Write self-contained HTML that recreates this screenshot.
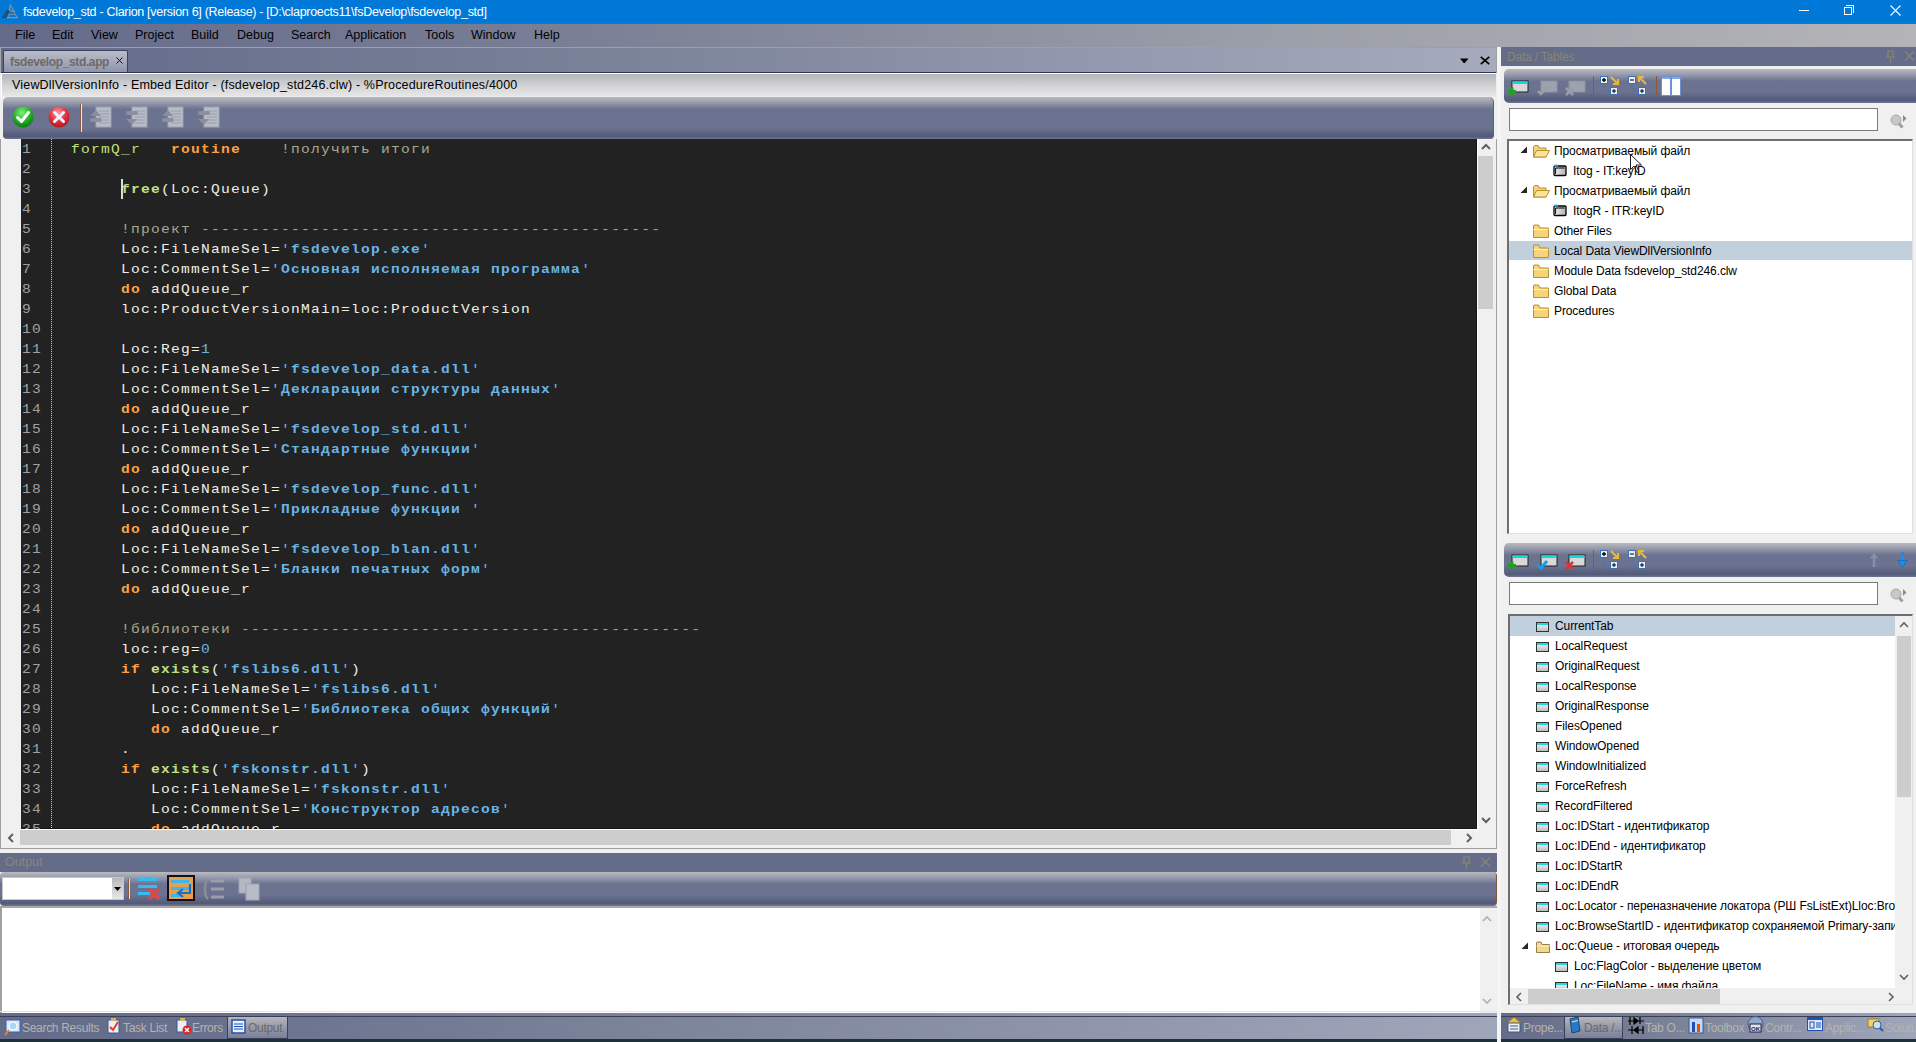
<!DOCTYPE html>
<html><head><meta charset="utf-8">
<style>
*{margin:0;padding:0;box-sizing:border-box}
html,body{width:1916px;height:1042px;overflow:hidden;background:#f0f0f0;font-family:"Liberation Sans",sans-serif;font-size:12px;color:#000}
.a{position:absolute}
svg{position:absolute;overflow:visible}
#title{left:0;top:0;width:1916px;height:23px;background:#0078d7;color:#fff}
#title .t{left:23px;top:5px;font-size:12.5px;white-space:pre;letter-spacing:-0.3px}
#menu{left:0;top:23px;width:1916px;height:24px;background:linear-gradient(90deg,#646b8a 0%,#7a7f96 30%,#9a9ea8 65%,#b4b4b8 100%);border-top:1px solid #5a6282}
#menu span{position:absolute;top:4px;font-size:12.5px}
#tabstrip{left:0;top:47px;width:1497px;height:26px;background:linear-gradient(90deg,#626a8a 0%,#7a8298 40%,#9096ac 70%,#a6aabd 100%);border-top:1px solid #a0a0a0;border-left:1px solid #a8a8a8;border-right:1px solid #a0a0a0}
#doctab{left:3px;top:50px;width:125px;height:23px;border:1px solid #3a4260;border-bottom:none;border-radius:2px 2px 0 0;background:linear-gradient(180deg,#babcc6 0%,#a6aabb 45%,#8c92aa 100%)}
#doctab .t{left:6px;top:4px;font-size:12px;font-weight:bold;color:#6b6a66;letter-spacing:-0.37px}
#tabline{left:1px;top:72px;width:1495px;height:1px;background:#2e3450}
#embtitle{left:1px;top:73px;width:1495px;height:24px;background:linear-gradient(180deg,#b6b8bc 1px,#c8c9cc 8px,#dcdcdc 16px,#e6e6e6 22px,#f2f2f2 23px);border-top:1px solid #ffffff;border-left:1px solid #fff}
#embtitle .t{left:10px;top:4px;font-size:12.5px;white-space:pre;color:#000;letter-spacing:0.18px}
#tb{left:3px;top:97px;width:1491px;height:42px;border-radius:5px 5px 4px 4px;background:linear-gradient(180deg,#b8babe 0px,#9a9eae 5px,#6b7390 12px,#6b7390 31px,#5a6180 37px,#535a77 40px,#6a7090 41px);border-right:1px solid #7a5a40}
#editor{left:0;top:139px;width:1497px;height:710px;background:#f0f0f0;border-left:1px solid #a0a0a0;border-right:1px solid #a0a0a0;border-bottom:1px solid #a0a0a0}
#code{left:21px;top:139px;width:1457px;height:690px;background:#222;overflow:hidden;border-right:1px solid #fff;box-shadow:inset -1px -1px 0 #151515}
.ln{position:absolute;left:1px;line-height:20px;width:40px;font-family:"Liberation Mono",monospace;font-size:13.5px;color:#a0a0a0;white-space:pre;letter-spacing:1.16px;transform:scaleX(1.08);transform-origin:0 0}
.cl{position:absolute;left:50px;line-height:20px;font-family:"Liberation Mono",monospace;font-size:13.5px;color:#eeeee6;white-space:pre;letter-spacing:1.16px;transform:scaleX(1.08);transform-origin:0 0}
.k{color:#ffa040;font-weight:bold}
.g{color:#c0e080}
.gb{color:#c0e080;font-weight:bold}
.s{color:#6ab4e4;font-weight:bold}
.q{color:#6ab4e4}
.n{color:#6ab4e4}
.c{color:#a8a890}
.chev{position:absolute;width:6px;height:6px;border-left:2px solid #606060;border-top:2px solid #606060}
#outhdr{left:0;top:853px;width:1497px;height:19px;background:#646c8a}
#outhdr .t{left:5px;top:2px;font-size:12.5px;color:#8a8672}
#outtb{left:0;top:872px;width:1497px;height:34px;border-radius:4px;border-right:1px solid #7a5a40;background:linear-gradient(180deg,#b8babe 0px,#9a9eae 5px,#6b7390 12px,#6b7390 23px,#5a6180 29px,#535a77 32px,#6a7090 33px)}
#outbody{left:0;top:906px;width:1497px;height:107px;background:#fff;border-left:2px solid #a0a0a0;border-top:2px solid #a8a8a8;border-right:1px solid #a0a0a0}
#bottabs{left:0;top:1013px;width:1497px;height:29px;background:linear-gradient(90deg,#646c8a 0%,#68708e 13%,#7a8298 40%,#a0a6ba 100%);border-bottom:3px solid #1e3038}
.well{position:absolute;left:0;top:3px;width:100%;height:1px;background:#3a4058}
.seltab{position:absolute;top:3px;height:23px;background:linear-gradient(180deg,#b8b8bc 0%,#9a9eae 40%,#7a8098 100%);border:1px solid #3a4058}
.bt{position:absolute;top:8px;font-size:12px;letter-spacing:-0.3px;color:#b4b4ae;white-space:nowrap}
#right{left:1501px;top:47px;width:415px;height:995px;background:#f0f0f0}
.tbr{border-radius:5px 0 0 5px;background:linear-gradient(180deg,#b8babe 0px,#9a9eae 5px,#6b7390 12px,#6b7390 23px,#5a6180 29px,#535a77 32px,#6a7090 33px)}
</style></head><body>
<div id="title" class="a">
<svg style="left:0px;top:0px" width="20" height="20" viewBox="0 0 20 20"><path d="M10.3 5 L14.5 12 L9.2 9.8 Z" fill="none" stroke="#909090" stroke-width="1.1"/><path d="M3 17.5 L7.2 10.5 L8.6 11.5 L5.6 17.5 Z" fill="none" stroke="#3a3a3a" stroke-width="1.2"/><path d="M9.5 14.2 L15.2 14.2 L17.5 17.6 L7.6 17.6 Z" fill="none" stroke="#909090" stroke-width="1.1"/></svg>
<div class="t a">fsdevelop_std - Clarion [version 6] (Release) - [D:\claproects11\fsDevelop\fsdevelop_std]</div>
<div class="a" style="left:1799px;top:10px;width:10px;height:1px;background:#fff"></div>
<div class="a" style="left:1844px;top:7px;width:8px;height:8px;border:1px solid #fff"></div>
<div class="a" style="left:1846px;top:5px;width:8px;height:8px;border-top:1px solid #fff;border-right:1px solid #fff"></div>
<svg style="left:1890px;top:5px" width="11" height="11" viewBox="0 0 11 11"><path d="M0.5 0.5 L10.5 10.5 M10.5 0.5 L0.5 10.5" stroke="#fff" stroke-width="1.1"/></svg>
</div>
<div id="menu" class="a">
<span style="left:15px">File</span><span style="left:52px">Edit</span><span style="left:91px">View</span><span style="left:135px">Project</span><span style="left:191px">Build</span><span style="left:237px">Debug</span><span style="left:291px">Search</span><span style="left:345px">Application</span><span style="left:425px">Tools</span><span style="left:471px">Window</span><span style="left:534px">Help</span>
</div>
<div id="tabstrip" class="a">
<svg style="left:1459px;top:10px" width="9" height="6" viewBox="0 0 9 6"><path d="M0 0.5 L8.5 0.5 L4.8 5 L3.7 5 Z" fill="#000"/></svg>
<svg style="left:1479px;top:8px" width="10" height="9" viewBox="0 0 10 9"><path d="M0.8 0.8 L9.2 8.2 M9.2 0.8 L0.8 8.2" stroke="#000" stroke-width="1.7"/></svg>
</div>
<div id="doctab" class="a"><div class="t a">fsdevelop_std.app</div>
<svg style="left:112px;top:6px" width="7" height="7" viewBox="0 0 7 7"><path d="M0.5 0.5 L6.5 6.5 M6.5 0.5 L0.5 6.5" stroke="#111" stroke-width="1"/></svg>
</div>
<div id="tabline" class="a"></div>
<div id="embtitle" class="a"><div class="t a">ViewDllVersionInfo - Embed Editor - (fsdevelop_std246.clw) - %ProcedureRoutines/4000</div></div>
<div id="tb" class="a">
<svg style="left:9px;top:9px" width="22" height="22" viewBox="0 0 22 22"><defs><radialGradient id="gg" cx="0.45" cy="0.3" r="0.7"><stop offset="0" stop-color="#7ef07a"/><stop offset="0.6" stop-color="#22b022"/><stop offset="1" stop-color="#0a7a10"/></radialGradient></defs><circle cx="11" cy="11" r="10.5" fill="url(#gg)"/><path d="M5.5 11.5 L9.5 15.5 L16.5 6.5" fill="none" stroke="#fff" stroke-width="3" stroke-linecap="round" stroke-linejoin="round"/></svg>
<svg style="left:45px;top:9px" width="22" height="22" viewBox="0 0 22 22"><defs><radialGradient id="rg" cx="0.45" cy="0.3" r="0.7"><stop offset="0" stop-color="#f89aa0"/><stop offset="0.6" stop-color="#e0303a"/><stop offset="1" stop-color="#b01820"/></radialGradient></defs><circle cx="11" cy="11" r="10.5" fill="url(#rg)"/><path d="M6.5 6.5 L15.5 15.5 M15.5 6.5 L6.5 15.5" fill="none" stroke="#eef4ff" stroke-width="3" stroke-linecap="round"/></svg>
<div class="a" style="left:77px;top:7px;width:1px;height:28px;background:#8a5a3a"></div>
<div class="a" style="left:78px;top:7px;width:1px;height:28px;background:#e8e8ee"></div>
<svg style="left:87px;top:10px" width="22" height="21" viewBox="0 0 22 21"><rect x="6" y="0" width="15" height="20" fill="#b8bcc8" stroke="#a0a4b0"/><path d="M9 4h10M9 7h10M9 10h10M9 13h10M9 16h10" stroke="#9ca0ac"/><path d="M0 9 L6 3 L11 9 Z" fill="#8c909c"/><rect x="0" y="11" width="12" height="4" rx="2" fill="#8c909c"/></svg>
<svg style="left:123px;top:10px" width="22" height="21" viewBox="0 0 22 21"><rect x="6" y="0" width="15" height="20" fill="#b8bcc8" stroke="#a0a4b0"/><path d="M9 4h10M9 7h10M9 10h10M9 13h10M9 16h10" stroke="#9ca0ac"/><rect x="0" y="4" width="12" height="4" rx="2" fill="#8c909c"/><path d="M0 12 L11 12 L6 18 Z" fill="#8c909c"/></svg>
<svg style="left:159px;top:10px" width="22" height="21" viewBox="0 0 22 21"><rect x="6" y="0" width="15" height="20" fill="#b8bcc8" stroke="#a0a4b0"/><path d="M9 4h10M9 7h10M9 10h10M9 13h10M9 16h10" stroke="#9ca0ac"/><path d="M0 9 L6 3 L11 9 Z" fill="#8c909c"/><rect x="0" y="11" width="12" height="4" rx="2" fill="#8c909c"/></svg>
<svg style="left:195px;top:10px" width="22" height="21" viewBox="0 0 22 21"><rect x="6" y="0" width="15" height="20" fill="#b8bcc8" stroke="#a0a4b0"/><path d="M9 4h10M9 7h10M9 10h10M9 13h10M9 16h10" stroke="#9ca0ac"/><rect x="0" y="4" width="12" height="4" rx="2" fill="#8c909c"/><path d="M0 12 L11 12 L6 18 Z" fill="#8c909c"/></svg>
</div>
<div id="editor" class="a">
<!-- vertical scrollbar -->
<div class="a" style="left:1477px;top:17px;width:15px;height:153px;background:#cdcdcd"></div>
<svg style="left:1480px;top:5px" width="10" height="6" viewBox="0 0 10 6"><path d="M1 5 L5 1 L9 5" fill="none" stroke="#606060" stroke-width="2"/></svg>
<svg style="left:1480px;top:678px" width="10" height="6" viewBox="0 0 10 6"><path d="M1 1 L5 5 L9 1" fill="none" stroke="#606060" stroke-width="2"/></svg>
<!-- horizontal scrollbar -->
<div class="a" style="left:19px;top:691px;width:1431px;height:15px;background:#cdcdcd"></div>
<svg style="left:7px;top:694px" width="6" height="10" viewBox="0 0 6 10"><path d="M5 1 L1 5 L5 9" fill="none" stroke="#606060" stroke-width="2"/></svg>
<svg style="left:1465px;top:694px" width="6" height="10" viewBox="0 0 6 10"><path d="M1 1 L5 5 L1 9" fill="none" stroke="#606060" stroke-width="2"/></svg>
</div>
<div id="code" class="a">
<div class="a" style="left:30px;top:0;width:1px;height:690px;background:repeating-linear-gradient(180deg,#c8c8c8 0 1px,transparent 1px 2px)"></div>
<div class="ln" style="top:1px">1</div>
<div class="cl" style="top:1px"><span class="g">formQ_r</span>   <span class="k">routine</span>    <span class="c">!получить итоги</span></div>
<div class="ln" style="top:21px">2</div>
<div class="ln" style="top:41px">3</div>
<div class="cl" style="top:41px">     <span class="gb">free</span>(Loc:Queue)</div>
<div class="ln" style="top:61px">4</div>
<div class="ln" style="top:81px">5</div>
<div class="cl" style="top:81px">     <span class="c">!проект ----------------------------------------------</span></div>
<div class="ln" style="top:101px">6</div>
<div class="cl" style="top:101px">     Loc:FileNameSel=<span class="q">&#x27;</span><span class="s">fsdevelop.exe</span><span class="q">&#x27;</span></div>
<div class="ln" style="top:121px">7</div>
<div class="cl" style="top:121px">     Loc:CommentSel=<span class="q">&#x27;</span><span class="s">Основная исполняемая программа</span><span class="q">&#x27;</span></div>
<div class="ln" style="top:141px">8</div>
<div class="cl" style="top:141px">     <span class="k">do</span> addQueue_r</div>
<div class="ln" style="top:161px">9</div>
<div class="cl" style="top:161px">     loc:ProductVersionMain=loc:ProductVersion</div>
<div class="ln" style="top:181px">10</div>
<div class="ln" style="top:201px">11</div>
<div class="cl" style="top:201px">     Loc:Reg=<span class="n">1</span></div>
<div class="ln" style="top:221px">12</div>
<div class="cl" style="top:221px">     Loc:FileNameSel=<span class="q">&#x27;</span><span class="s">fsdevelop_data.dll</span><span class="q">&#x27;</span></div>
<div class="ln" style="top:241px">13</div>
<div class="cl" style="top:241px">     Loc:CommentSel=<span class="q">&#x27;</span><span class="s">Декларации структуры данных</span><span class="q">&#x27;</span></div>
<div class="ln" style="top:261px">14</div>
<div class="cl" style="top:261px">     <span class="k">do</span> addQueue_r</div>
<div class="ln" style="top:281px">15</div>
<div class="cl" style="top:281px">     Loc:FileNameSel=<span class="q">&#x27;</span><span class="s">fsdevelop_std.dll</span><span class="q">&#x27;</span></div>
<div class="ln" style="top:301px">16</div>
<div class="cl" style="top:301px">     Loc:CommentSel=<span class="q">&#x27;</span><span class="s">Стандартные функции</span><span class="q">&#x27;</span></div>
<div class="ln" style="top:321px">17</div>
<div class="cl" style="top:321px">     <span class="k">do</span> addQueue_r</div>
<div class="ln" style="top:341px">18</div>
<div class="cl" style="top:341px">     Loc:FileNameSel=<span class="q">&#x27;</span><span class="s">fsdevelop_func.dll</span><span class="q">&#x27;</span></div>
<div class="ln" style="top:361px">19</div>
<div class="cl" style="top:361px">     Loc:CommentSel=<span class="q">&#x27;</span><span class="s">Прикладные функции </span><span class="q">&#x27;</span></div>
<div class="ln" style="top:381px">20</div>
<div class="cl" style="top:381px">     <span class="k">do</span> addQueue_r</div>
<div class="ln" style="top:401px">21</div>
<div class="cl" style="top:401px">     Loc:FileNameSel=<span class="q">&#x27;</span><span class="s">fsdevelop_blan.dll</span><span class="q">&#x27;</span></div>
<div class="ln" style="top:421px">22</div>
<div class="cl" style="top:421px">     Loc:CommentSel=<span class="q">&#x27;</span><span class="s">Бланки печатных форм</span><span class="q">&#x27;</span></div>
<div class="ln" style="top:441px">23</div>
<div class="cl" style="top:441px">     <span class="k">do</span> addQueue_r</div>
<div class="ln" style="top:461px">24</div>
<div class="ln" style="top:481px">25</div>
<div class="cl" style="top:481px">     <span class="c">!библиотеки ----------------------------------------------</span></div>
<div class="ln" style="top:501px">26</div>
<div class="cl" style="top:501px">     loc:reg=<span class="n">0</span></div>
<div class="ln" style="top:521px">27</div>
<div class="cl" style="top:521px">     <span class="k">if</span> <span class="gb">exists</span>(<span class="q">&#x27;</span><span class="s">fslibs6.dll</span><span class="q">&#x27;</span>)</div>
<div class="ln" style="top:541px">28</div>
<div class="cl" style="top:541px">        Loc:FileNameSel=<span class="q">&#x27;</span><span class="s">fslibs6.dll</span><span class="q">&#x27;</span></div>
<div class="ln" style="top:561px">29</div>
<div class="cl" style="top:561px">        Loc:CommentSel=<span class="q">&#x27;</span><span class="s">Библиотека общих функций</span><span class="q">&#x27;</span></div>
<div class="ln" style="top:581px">30</div>
<div class="cl" style="top:581px">        <span class="k">do</span> addQueue_r</div>
<div class="ln" style="top:601px">31</div>
<div class="cl" style="top:601px">     .</div>
<div class="ln" style="top:621px">32</div>
<div class="cl" style="top:621px">     <span class="k">if</span> <span class="gb">exists</span>(<span class="q">&#x27;</span><span class="s">fskonstr.dll</span><span class="q">&#x27;</span>)</div>
<div class="ln" style="top:641px">33</div>
<div class="cl" style="top:641px">        Loc:FileNameSel=<span class="q">&#x27;</span><span class="s">fskonstr.dll</span><span class="q">&#x27;</span></div>
<div class="ln" style="top:661px">34</div>
<div class="cl" style="top:661px">        Loc:CommentSel=<span class="q">&#x27;</span><span class="s">Конструктор адресов</span><span class="q">&#x27;</span></div>
<div class="ln" style="top:681px">35</div>
<div class="cl" style="top:681px">        <span class="k">do</span> addQueue_r</div>

<div class="a" style="left:100px;top:40px;width:2px;height:20px;background:#dcdcdc"></div>
</div>
<div class="a" style="left:21px;top:829px;width:1457px;height:1px;background:#fff"></div>
<div id="outhdr" class="a"><div class="t a">Output</div>
<svg style="left:1462px;top:3px" width="9" height="13" viewBox="0 0 9 13"><path d="M2 1h5v6h-5z M0 7h9 M4.5 7v6" fill="none" stroke="#8a8672" stroke-width="1.2"/></svg>
<svg style="left:1480px;top:4px" width="11" height="10" viewBox="0 0 11 10"><path d="M1 0.5 L10 9.5 M10 0.5 L1 9.5" stroke="#8a8672" stroke-width="1.2"/></svg>
</div>
<div id="outtb" class="a">
<div class="a" style="left:2px;top:5px;width:122px;height:23px;background:#fff;border:1px solid #c8c8c8"></div>
<div class="a" style="left:112px;top:6px;width:11px;height:21px;background:linear-gradient(180deg,#b8b8b8,#e8e8e8)"></div>
<svg style="left:114px;top:15px" width="7" height="4" viewBox="0 0 7 4"><path d="M0 0 L7 0 L3.5 4 Z" fill="#000"/></svg>
<div class="a" style="left:128px;top:7px;width:1px;height:20px;background:#8a5a3a"></div>
<div class="a" style="left:129px;top:7px;width:1px;height:20px;background:#e0e0e8"></div>
<svg style="left:138px;top:5px" width="24" height="24" viewBox="0 0 24 24"><path d="M0 2.5h19M0 9.5h19M0 16.5h12" stroke="#3ab8f0" stroke-width="3"/><path d="M11 12 L21 22 M21 12 L11 22" stroke="#e04848" stroke-width="3.5"/></svg>
<div class="a" style="left:167px;top:3px;width:28px;height:26px;background:#e8a050;border:2px solid #111"></div>
<svg style="left:170px;top:7px" width="22" height="20" viewBox="0 0 22 20"><path d="M1 2.5h18M1 9.5h18M1 16.5h10" stroke="#3ab8f0" stroke-width="3"/><path d="M20 5 V14 H10 M13 10 L8 14 L13 18" fill="none" stroke="#1a70c8" stroke-width="2.2"/></svg>
<svg style="left:203px;top:6px" width="22" height="22" viewBox="0 0 22 22"><path d="M8 3h13M8 11h13M8 19h13" stroke="#9a9eaa" stroke-width="3"/><path d="M5 1 C1 4 1 18 5 21" fill="none" stroke="#8a8e9a" stroke-width="2.5"/></svg>
<svg style="left:238px;top:5px" width="22" height="24" viewBox="0 0 22 24"><rect x="1" y="1" width="12" height="15" fill="#b4b8c4" stroke="#a0a4b0"/><rect x="8" y="7" width="13" height="16" fill="#b8bcc8" stroke="#a0a4b0"/></svg>
</div>
<div id="outbody" class="a">
<div class="a" style="left:1478px;top:0;width:17px;height:105px;background:#f0f0f0"></div>
<svg style="left:1480px;top:8px" width="10" height="6" viewBox="0 0 10 6"><path d="M1 5 L5 1 L9 5" fill="none" stroke="#b0b0b0" stroke-width="1.6"/></svg>
<svg style="left:1480px;top:90px" width="10" height="6" viewBox="0 0 10 6"><path d="M1 1 L5 5 L9 1" fill="none" stroke="#b0b0b0" stroke-width="1.6"/></svg>
</div>
<div class="a" style="left:0;top:1011px;width:1497px;height:1px;background:#e4e4e4"></div>
<div id="bottabs" class="a">
<div class="well"></div><div class="seltab" style="left:227px;width:61px"></div>
<svg style="left:4px;top:6px" width="17" height="17" viewBox="0 0 17 17"><rect x="2" y="1" width="14" height="12" fill="#dfe8f8" stroke="#3060c0"/><circle cx="9" cy="7" r="4" fill="#a8d8f8" stroke="#fff"/><path d="M5 11 L1 16" stroke="#e08a30" stroke-width="2"/></svg>
<div class="bt" style="left:22px">Search Results</div>
<svg style="left:107px;top:4px" width="13" height="17" viewBox="0 0 13 17"><rect x="1" y="3" width="11" height="13" fill="#e8eef8" stroke="#3a5a90"/><rect x="4" y="1" width="5" height="3" fill="#d0b070"/><path d="M3 10 L6 13 L11 5" fill="none" stroke="#e04020" stroke-width="2"/></svg>
<div class="bt" style="left:123px">Task List</div>
<svg style="left:176px;top:4px" width="16" height="18" viewBox="0 0 16 18"><rect x="1" y="3" width="10" height="12" fill="#e8eef8" stroke="#3a5a90"/><rect x="4" y="1" width="5" height="3" fill="#d0b070"/><circle cx="11" cy="13" r="4.5" fill="#e02020"/><path d="M9 11 L13 15 M13 11 L9 15" stroke="#fff" stroke-width="1.4"/></svg>
<div class="bt" style="left:192px">Errors</div>
<svg style="left:231px;top:6px" width="15" height="15" viewBox="0 0 15 15"><rect x="1" y="1" width="13" height="13" fill="#e8f0fc" stroke="#2050b0" stroke-width="1.5"/><path d="M3 5h9M3 7.5h9M3 10h9" stroke="#2050b0"/></svg>
<div class="bt" style="left:248px;color:#6a6a64">Output</div>
</div>
<div id="right" class="a">
<div class="a" style="left:-4px;top:0;width:4px;height:995px;background:#f4f4f4"></div>
<!-- header -->
<div class="a" style="left:0;top:0;width:415px;height:19px;background:#646c8a">
<div class="a" style="left:6px;top:3px;font-size:12px;letter-spacing:-0.2px;color:#8a8672">Data / Tables</div>
<svg style="left:385px;top:3px" width="9" height="13" viewBox="0 0 9 13"><path d="M2 1h5v6h-5z M0 7h9 M4.5 7v6" fill="none" stroke="#8a8672" stroke-width="1.2"/></svg>
<svg style="left:403px;top:4px" width="11" height="10" viewBox="0 0 11 10"><path d="M1 0.5 L10 9.5 M10 0.5 L1 9.5" stroke="#8a8672" stroke-width="1.2"/></svg>
</div>
<!-- toolbar 1 -->
<div class="a tbr" style="left:3px;top:22px;width:412px;height:34px"></div>
<svg style="left:7px;top:33px" width="22" height="17" viewBox="0 0 22 17"><rect x="4" y="1" width="16" height="11" fill="#d8d8d8" stroke="#202020"/><rect x="4.5" y="1.5" width="15" height="2.5" fill="#10d8e0"/><path d="M0 11.5h8M4 7.5v8" stroke="#20a020" stroke-width="3"/></svg>
<svg style="left:36px;top:33px" width="22" height="17" viewBox="0 0 22 17"><rect x="4" y="1" width="16" height="11" fill="#9ea2ae" stroke="#8e929e"/><path d="M1 11 L4 14 L10 7" fill="none" stroke="#9a9eaa" stroke-width="2.5"/></svg>
<svg style="left:64px;top:33px" width="22" height="17" viewBox="0 0 22 17"><rect x="4" y="1" width="16" height="11" fill="#9ea2ae" stroke="#8e929e"/><path d="M1 8 L8 15 M8 8 L1 15" stroke="#9a9eaa" stroke-width="2.5"/></svg>
<div class="a" style="left:92px;top:29px;width:1px;height:19px;background:#8a5a3a"></div>
<svg style="left:99px;top:29px" width="21" height="19" viewBox="0 0 21 19"><rect x="0.5" y="0.5" width="7" height="7" fill="#e8ecf4" stroke="#4070b0"/><path d="M2 4h4M4 2v4" stroke="#000" stroke-width="1.3"/><rect x="10.5" y="11.5" width="7" height="7" fill="#e8ecf4" stroke="#4070b0"/><path d="M12 15h4M14 13v4" stroke="#000"/><path d="M4 8v7h6" fill="none" stroke="#4070b0" stroke-dasharray="1 1"/><path d="M11 1 L18 8 M18 3v5h-5" fill="none" stroke="#e8b830" stroke-width="2.2"/></svg>
<svg style="left:127px;top:29px" width="21" height="19" viewBox="0 0 21 19"><rect x="0.5" y="0.5" width="7" height="7" fill="#e8ecf4" stroke="#4070b0"/><path d="M2 4h4" stroke="#000"/><rect x="10.5" y="11.5" width="7" height="7" fill="#e8ecf4" stroke="#4070b0"/><path d="M12 15h4M14 13v4" stroke="#000"/><path d="M4 8v7h6" fill="none" stroke="#4070b0" stroke-dasharray="1 1"/><path d="M18 8 L11 1 M11 6v-5h5" fill="none" stroke="#e8b830" stroke-width="2.2"/></svg>
<div class="a" style="left:155px;top:29px;width:1px;height:19px;background:#8a5a3a"></div>
<svg style="left:160px;top:29px" width="20" height="20" viewBox="0 0 20 20"><rect x="0.5" y="0.5" width="9" height="19" fill="#fff" stroke="#7090d0"/><rect x="10.5" y="0.5" width="9" height="19" fill="#fff" stroke="#7090d0"/><rect x="1" y="1" width="8" height="2" fill="#80a8e8"/><rect x="11" y="1" width="8" height="2" fill="#80a8e8"/></svg>
<!-- search 1 -->
<div class="a" style="left:8px;top:61px;width:369px;height:23px;background:#fff;border:1px solid #7a7a7a"></div>
<svg style="left:389px;top:67px" width="17" height="15" viewBox="0 0 17 15"><circle cx="6" cy="6" r="5" fill="#c8c8c8" stroke="#a8a8a8"/><path d="M9 9.5 L12.5 13.5" stroke="#a0a0a0" stroke-width="3"/><path d="M13 1 L16.5 4.5 L13 8 Z" fill="#8a8a8a"/></svg>
<!-- tree 1 -->
<div class="a" style="left:6px;top:92px;width:406px;height:395px;background:#fff;border-top:2px solid #6e6e6e;border-left:2px solid #6e6e6e;border-right:1px solid #e0e0e0;border-bottom:1px solid #e0e0e0"></div>
<div class="a" style="left:8px;top:194px;width:403px;height:19px;background:#c2cfdc"></div>
<svg style="left:19px;top:99px" width="8" height="8" viewBox="0 0 8 8"><path d="M7 0.5 L7 7 L0.5 7 Z" fill="#262626"/></svg>
<svg style="left:32px;top:97px" width="17" height="14" viewBox="0 0 17 14"><path d="M0.5 2.5 L0.5 13 L13 13 L13 4 L6 4 L5 1.5 L1.5 1.5 Z" fill="#f6d47a" stroke="#b8902a"/><path d="M0.5 13 L3.5 6.5 L16.5 6.5 L13 13 Z" fill="#fbe49a" stroke="#b8902a"/></svg>
<div class="a" style="left:53px;top:97px;font-size:12px;letter-spacing:-0.1px;white-space:nowrap;">Просматриваемый файл</div>
<svg style="left:52px;top:117px" width="15" height="13" viewBox="0 0 15 13"><defs><linearGradient id="tg" x1="0" y1="0" x2="1" y2="0"><stop offset="0" stop-color="#f4f4f4"/><stop offset="1" stop-color="#b0b0b0"/></linearGradient></defs><rect x="1" y="2" width="12" height="9.5" rx="1" fill="url(#tg)" stroke="#000" stroke-width="1.3"/><path d="M2.6 4 H11.5 M2.6 4 V10" fill="none" stroke="#000" stroke-width="1"/><rect x="1.5" y="0.6" width="3.5" height="2" fill="#20a8f0"/></svg>
<div class="a" style="left:72px;top:117px;font-size:12px;letter-spacing:-0.1px;white-space:nowrap;">Itog - IT:keyID</div>
<svg style="left:19px;top:139px" width="8" height="8" viewBox="0 0 8 8"><path d="M7 0.5 L7 7 L0.5 7 Z" fill="#262626"/></svg>
<svg style="left:32px;top:137px" width="17" height="14" viewBox="0 0 17 14"><path d="M0.5 2.5 L0.5 13 L13 13 L13 4 L6 4 L5 1.5 L1.5 1.5 Z" fill="#f6d47a" stroke="#b8902a"/><path d="M0.5 13 L3.5 6.5 L16.5 6.5 L13 13 Z" fill="#fbe49a" stroke="#b8902a"/></svg>
<div class="a" style="left:53px;top:137px;font-size:12px;letter-spacing:-0.1px;white-space:nowrap;">Просматриваемый файл</div>
<svg style="left:52px;top:157px" width="15" height="13" viewBox="0 0 15 13"><defs><linearGradient id="tg" x1="0" y1="0" x2="1" y2="0"><stop offset="0" stop-color="#f4f4f4"/><stop offset="1" stop-color="#b0b0b0"/></linearGradient></defs><rect x="1" y="2" width="12" height="9.5" rx="1" fill="url(#tg)" stroke="#000" stroke-width="1.3"/><path d="M2.6 4 H11.5 M2.6 4 V10" fill="none" stroke="#000" stroke-width="1"/><rect x="1.5" y="0.6" width="3.5" height="2" fill="#20a8f0"/></svg>
<div class="a" style="left:72px;top:157px;font-size:12px;letter-spacing:-0.1px;white-space:nowrap;">ItogR - ITR:keyID</div>
<svg style="left:32px;top:177px" width="16" height="14" viewBox="0 0 16 14"><path d="M0.5 2 L0.5 13.5 L15.5 13.5 L15.5 4 L7 4 L5.5 1 L1 1 Z" fill="#f6d47a" stroke="#b8902a"/><path d="M0.5 5.5 H15.5" stroke="#fff2c0"/></svg>
<div class="a" style="left:53px;top:177px;font-size:12px;letter-spacing:-0.1px;white-space:nowrap;">Other Files</div>
<svg style="left:32px;top:197px" width="16" height="14" viewBox="0 0 16 14"><path d="M0.5 2 L0.5 13.5 L15.5 13.5 L15.5 4 L7 4 L5.5 1 L1 1 Z" fill="#f6d47a" stroke="#b8902a"/><path d="M0.5 5.5 H15.5" stroke="#fff2c0"/></svg>
<div class="a" style="left:53px;top:197px;font-size:12px;letter-spacing:-0.1px;white-space:nowrap;">Local Data ViewDllVersionInfo</div>
<svg style="left:32px;top:217px" width="16" height="14" viewBox="0 0 16 14"><path d="M0.5 2 L0.5 13.5 L15.5 13.5 L15.5 4 L7 4 L5.5 1 L1 1 Z" fill="#f6d47a" stroke="#b8902a"/><path d="M0.5 5.5 H15.5" stroke="#fff2c0"/></svg>
<div class="a" style="left:53px;top:217px;font-size:12px;letter-spacing:-0.1px;white-space:nowrap;">Module Data fsdevelop_std246.clw</div>
<svg style="left:32px;top:237px" width="16" height="14" viewBox="0 0 16 14"><path d="M0.5 2 L0.5 13.5 L15.5 13.5 L15.5 4 L7 4 L5.5 1 L1 1 Z" fill="#f6d47a" stroke="#b8902a"/><path d="M0.5 5.5 H15.5" stroke="#fff2c0"/></svg>
<div class="a" style="left:53px;top:237px;font-size:12px;letter-spacing:-0.1px;white-space:nowrap;">Global Data</div>
<svg style="left:32px;top:257px" width="16" height="14" viewBox="0 0 16 14"><path d="M0.5 2 L0.5 13.5 L15.5 13.5 L15.5 4 L7 4 L5.5 1 L1 1 Z" fill="#f6d47a" stroke="#b8902a"/><path d="M0.5 5.5 H15.5" stroke="#fff2c0"/></svg>
<div class="a" style="left:53px;top:257px;font-size:12px;letter-spacing:-0.1px;white-space:nowrap;">Procedures</div>
<svg style="left:129px;top:107px" width="14" height="20" viewBox="0 0 14 20"><path d="M0.5 0.5 V15.5 L4 12 L7 18.5 L9 17.5 L6 11 L11.5 11 Z" fill="none" stroke="#1a1a2a" stroke-width="1"/></svg>
<!-- toolbar 2 -->
<div class="a tbr" style="left:3px;top:496px;width:412px;height:34px"></div>
<svg style="left:7px;top:507px" width="22" height="17" viewBox="0 0 22 17"><rect x="4" y="1" width="16" height="11" fill="#d8d8d8" stroke="#202020"/><rect x="4.5" y="1.5" width="15" height="2.5" fill="#10d8e0"/><path d="M0 11.5h8M4 7.5v8" stroke="#20a020" stroke-width="3"/></svg>
<svg style="left:36px;top:507px" width="22" height="17" viewBox="0 0 22 17"><rect x="4" y="1" width="16" height="11" fill="#d8d8d8" stroke="#202020"/><rect x="4.5" y="1.5" width="15" height="2.5" fill="#10d8e0"/><path d="M1 11 L4 14 L10 7" fill="none" stroke="#10a0f0" stroke-width="3"/></svg>
<svg style="left:64px;top:507px" width="22" height="17" viewBox="0 0 22 17"><rect x="4" y="1" width="16" height="11" fill="#d8d8d8" stroke="#202020"/><rect x="4.5" y="1.5" width="15" height="2.5" fill="#10d8e0"/><path d="M1 8 L8 15 M8 8 L1 15" stroke="#e03030" stroke-width="2.5"/></svg>
<div class="a" style="left:92px;top:503px;width:1px;height:19px;background:#8a5a3a"></div>
<svg style="left:99px;top:503px" width="21" height="19" viewBox="0 0 21 19"><rect x="0.5" y="0.5" width="7" height="7" fill="#e8ecf4" stroke="#4070b0"/><path d="M2 4h4M4 2v4" stroke="#000" stroke-width="1.3"/><rect x="10.5" y="11.5" width="7" height="7" fill="#e8ecf4" stroke="#4070b0"/><path d="M12 15h4M14 13v4" stroke="#000"/><path d="M4 8v7h6" fill="none" stroke="#4070b0" stroke-dasharray="1 1"/><path d="M11 1 L18 8 M18 3v5h-5" fill="none" stroke="#e8b830" stroke-width="2.2"/></svg>
<svg style="left:127px;top:503px" width="21" height="19" viewBox="0 0 21 19"><rect x="0.5" y="0.5" width="7" height="7" fill="#e8ecf4" stroke="#4070b0"/><path d="M2 4h4" stroke="#000"/><rect x="10.5" y="11.5" width="7" height="7" fill="#e8ecf4" stroke="#4070b0"/><path d="M12 15h4M14 13v4" stroke="#000"/><path d="M4 8v7h6" fill="none" stroke="#4070b0" stroke-dasharray="1 1"/><path d="M18 8 L11 1 M11 6v-5h5" fill="none" stroke="#e8b830" stroke-width="2.2"/></svg>
<svg style="left:368px;top:505px" width="10" height="16" viewBox="0 0 10 16"><path d="M5 15V5" stroke="#8a90a4" stroke-width="2.5"/><path d="M0.5 6.5 L5 1 L9.5 6.5 Z" fill="#8a90a4"/></svg>
<svg style="left:396px;top:504px" width="11" height="17" viewBox="0 0 11 17"><path d="M5.5 1V11" stroke="#1890e8" stroke-width="3"/><path d="M0.5 9.5 L5.5 16 L10.5 9.5 Z" fill="#1890e8" stroke="#0a60b0" stroke-width="0.6"/></svg>
<!-- search 2 -->
<div class="a" style="left:8px;top:535px;width:369px;height:23px;background:#fff;border:1px solid #7a7a7a"></div>
<svg style="left:389px;top:541px" width="17" height="15" viewBox="0 0 17 15"><circle cx="6" cy="6" r="5" fill="#c8c8c8" stroke="#a8a8a8"/><path d="M9 9.5 L12.5 13.5" stroke="#a0a0a0" stroke-width="3"/><path d="M13 1 L16.5 4.5 L13 8 Z" fill="#8a8a8a"/></svg>
<!-- list 2 -->
<div class="a" style="left:7px;top:567px;width:405px;height:391px;background:#fff;border-top:2px solid #6e6e6e;border-left:2px solid #6e6e6e;border-right:1px solid #e0e0e0;border-bottom:1px solid #e0e0e0;overflow:hidden">
<div class="a" style="left:0;top:0;width:385px;height:20px;background:#c2cfdc"></div>
<svg style="left:26px;top:6px" width="13" height="10" viewBox="0 0 13 10"><defs><linearGradient id="fg0" x1="0" y1="0" x2="0" y2="1"><stop offset="0" stop-color="#fafafa"/><stop offset="1" stop-color="#b8b8b8"/></linearGradient></defs><rect x="0.5" y="0.5" width="12" height="9" fill="url(#fg0)" stroke="#303030"/><rect x="1" y="1" width="11" height="2" fill="#20d8e0"/></svg>
<div class="a" style="left:45px;top:3px;font-size:12px;letter-spacing:-0.1px;white-space:nowrap;">CurrentTab</div>
<svg style="left:26px;top:26px" width="13" height="10" viewBox="0 0 13 10"><defs><linearGradient id="fg1" x1="0" y1="0" x2="0" y2="1"><stop offset="0" stop-color="#fafafa"/><stop offset="1" stop-color="#b8b8b8"/></linearGradient></defs><rect x="0.5" y="0.5" width="12" height="9" fill="url(#fg1)" stroke="#303030"/><rect x="1" y="1" width="11" height="2" fill="#20d8e0"/></svg>
<div class="a" style="left:45px;top:23px;font-size:12px;letter-spacing:-0.1px;white-space:nowrap;">LocalRequest</div>
<svg style="left:26px;top:46px" width="13" height="10" viewBox="0 0 13 10"><defs><linearGradient id="fg2" x1="0" y1="0" x2="0" y2="1"><stop offset="0" stop-color="#fafafa"/><stop offset="1" stop-color="#b8b8b8"/></linearGradient></defs><rect x="0.5" y="0.5" width="12" height="9" fill="url(#fg2)" stroke="#303030"/><rect x="1" y="1" width="11" height="2" fill="#20d8e0"/></svg>
<div class="a" style="left:45px;top:43px;font-size:12px;letter-spacing:-0.1px;white-space:nowrap;">OriginalRequest</div>
<svg style="left:26px;top:66px" width="13" height="10" viewBox="0 0 13 10"><defs><linearGradient id="fg3" x1="0" y1="0" x2="0" y2="1"><stop offset="0" stop-color="#fafafa"/><stop offset="1" stop-color="#b8b8b8"/></linearGradient></defs><rect x="0.5" y="0.5" width="12" height="9" fill="url(#fg3)" stroke="#303030"/><rect x="1" y="1" width="11" height="2" fill="#20d8e0"/></svg>
<div class="a" style="left:45px;top:63px;font-size:12px;letter-spacing:-0.1px;white-space:nowrap;">LocalResponse</div>
<svg style="left:26px;top:86px" width="13" height="10" viewBox="0 0 13 10"><defs><linearGradient id="fg4" x1="0" y1="0" x2="0" y2="1"><stop offset="0" stop-color="#fafafa"/><stop offset="1" stop-color="#b8b8b8"/></linearGradient></defs><rect x="0.5" y="0.5" width="12" height="9" fill="url(#fg4)" stroke="#303030"/><rect x="1" y="1" width="11" height="2" fill="#20d8e0"/></svg>
<div class="a" style="left:45px;top:83px;font-size:12px;letter-spacing:-0.1px;white-space:nowrap;">OriginalResponse</div>
<svg style="left:26px;top:106px" width="13" height="10" viewBox="0 0 13 10"><defs><linearGradient id="fg5" x1="0" y1="0" x2="0" y2="1"><stop offset="0" stop-color="#fafafa"/><stop offset="1" stop-color="#b8b8b8"/></linearGradient></defs><rect x="0.5" y="0.5" width="12" height="9" fill="url(#fg5)" stroke="#303030"/><rect x="1" y="1" width="11" height="2" fill="#20d8e0"/></svg>
<div class="a" style="left:45px;top:103px;font-size:12px;letter-spacing:-0.1px;white-space:nowrap;">FilesOpened</div>
<svg style="left:26px;top:126px" width="13" height="10" viewBox="0 0 13 10"><defs><linearGradient id="fg6" x1="0" y1="0" x2="0" y2="1"><stop offset="0" stop-color="#fafafa"/><stop offset="1" stop-color="#b8b8b8"/></linearGradient></defs><rect x="0.5" y="0.5" width="12" height="9" fill="url(#fg6)" stroke="#303030"/><rect x="1" y="1" width="11" height="2" fill="#20d8e0"/></svg>
<div class="a" style="left:45px;top:123px;font-size:12px;letter-spacing:-0.1px;white-space:nowrap;">WindowOpened</div>
<svg style="left:26px;top:146px" width="13" height="10" viewBox="0 0 13 10"><defs><linearGradient id="fg7" x1="0" y1="0" x2="0" y2="1"><stop offset="0" stop-color="#fafafa"/><stop offset="1" stop-color="#b8b8b8"/></linearGradient></defs><rect x="0.5" y="0.5" width="12" height="9" fill="url(#fg7)" stroke="#303030"/><rect x="1" y="1" width="11" height="2" fill="#20d8e0"/></svg>
<div class="a" style="left:45px;top:143px;font-size:12px;letter-spacing:-0.1px;white-space:nowrap;">WindowInitialized</div>
<svg style="left:26px;top:166px" width="13" height="10" viewBox="0 0 13 10"><defs><linearGradient id="fg8" x1="0" y1="0" x2="0" y2="1"><stop offset="0" stop-color="#fafafa"/><stop offset="1" stop-color="#b8b8b8"/></linearGradient></defs><rect x="0.5" y="0.5" width="12" height="9" fill="url(#fg8)" stroke="#303030"/><rect x="1" y="1" width="11" height="2" fill="#20d8e0"/></svg>
<div class="a" style="left:45px;top:163px;font-size:12px;letter-spacing:-0.1px;white-space:nowrap;">ForceRefresh</div>
<svg style="left:26px;top:186px" width="13" height="10" viewBox="0 0 13 10"><defs><linearGradient id="fg9" x1="0" y1="0" x2="0" y2="1"><stop offset="0" stop-color="#fafafa"/><stop offset="1" stop-color="#b8b8b8"/></linearGradient></defs><rect x="0.5" y="0.5" width="12" height="9" fill="url(#fg9)" stroke="#303030"/><rect x="1" y="1" width="11" height="2" fill="#20d8e0"/></svg>
<div class="a" style="left:45px;top:183px;font-size:12px;letter-spacing:-0.1px;white-space:nowrap;">RecordFiltered</div>
<svg style="left:26px;top:206px" width="13" height="10" viewBox="0 0 13 10"><defs><linearGradient id="fg10" x1="0" y1="0" x2="0" y2="1"><stop offset="0" stop-color="#fafafa"/><stop offset="1" stop-color="#b8b8b8"/></linearGradient></defs><rect x="0.5" y="0.5" width="12" height="9" fill="url(#fg10)" stroke="#303030"/><rect x="1" y="1" width="11" height="2" fill="#20d8e0"/></svg>
<div class="a" style="left:45px;top:203px;font-size:12px;letter-spacing:-0.1px;white-space:nowrap;">Loc:IDStart - идентификатор</div>
<svg style="left:26px;top:226px" width="13" height="10" viewBox="0 0 13 10"><defs><linearGradient id="fg11" x1="0" y1="0" x2="0" y2="1"><stop offset="0" stop-color="#fafafa"/><stop offset="1" stop-color="#b8b8b8"/></linearGradient></defs><rect x="0.5" y="0.5" width="12" height="9" fill="url(#fg11)" stroke="#303030"/><rect x="1" y="1" width="11" height="2" fill="#20d8e0"/></svg>
<div class="a" style="left:45px;top:223px;font-size:12px;letter-spacing:-0.1px;white-space:nowrap;">Loc:IDEnd - идентификатор</div>
<svg style="left:26px;top:246px" width="13" height="10" viewBox="0 0 13 10"><defs><linearGradient id="fg12" x1="0" y1="0" x2="0" y2="1"><stop offset="0" stop-color="#fafafa"/><stop offset="1" stop-color="#b8b8b8"/></linearGradient></defs><rect x="0.5" y="0.5" width="12" height="9" fill="url(#fg12)" stroke="#303030"/><rect x="1" y="1" width="11" height="2" fill="#20d8e0"/></svg>
<div class="a" style="left:45px;top:243px;font-size:12px;letter-spacing:-0.1px;white-space:nowrap;">Loc:IDStartR</div>
<svg style="left:26px;top:266px" width="13" height="10" viewBox="0 0 13 10"><defs><linearGradient id="fg13" x1="0" y1="0" x2="0" y2="1"><stop offset="0" stop-color="#fafafa"/><stop offset="1" stop-color="#b8b8b8"/></linearGradient></defs><rect x="0.5" y="0.5" width="12" height="9" fill="url(#fg13)" stroke="#303030"/><rect x="1" y="1" width="11" height="2" fill="#20d8e0"/></svg>
<div class="a" style="left:45px;top:263px;font-size:12px;letter-spacing:-0.1px;white-space:nowrap;">Loc:IDEndR</div>
<svg style="left:26px;top:286px" width="13" height="10" viewBox="0 0 13 10"><defs><linearGradient id="fg14" x1="0" y1="0" x2="0" y2="1"><stop offset="0" stop-color="#fafafa"/><stop offset="1" stop-color="#b8b8b8"/></linearGradient></defs><rect x="0.5" y="0.5" width="12" height="9" fill="url(#fg14)" stroke="#303030"/><rect x="1" y="1" width="11" height="2" fill="#20d8e0"/></svg>
<div class="a" style="left:45px;top:283px;font-size:12px;letter-spacing:-0.1px;white-space:nowrap;">Loc:Locator - переназначение локатора (РШ FsListExt)Lloc:BrowseStartID</div>
<svg style="left:26px;top:306px" width="13" height="10" viewBox="0 0 13 10"><defs><linearGradient id="fg15" x1="0" y1="0" x2="0" y2="1"><stop offset="0" stop-color="#fafafa"/><stop offset="1" stop-color="#b8b8b8"/></linearGradient></defs><rect x="0.5" y="0.5" width="12" height="9" fill="url(#fg15)" stroke="#303030"/><rect x="1" y="1" width="11" height="2" fill="#20d8e0"/></svg>
<div class="a" style="left:45px;top:303px;font-size:12px;letter-spacing:-0.1px;white-space:nowrap;">Loc:BrowseStartID - идентификатор сохраняемой Primary-записи</div>
<svg style="left:11px;top:326px" width="8" height="8" viewBox="0 0 8 8"><path d="M7 0.5 L7 7 L0.5 7 Z" fill="#262626"/></svg>
<svg style="left:26px;top:325px" width="14" height="12" viewBox="0 0 14 12"><path d="M0.5 1.5 L0.5 11.5 L13.5 11.5 L13.5 3.5 L6 3.5 L5 1 L1 1 Z" fill="#f0d890" stroke="#9a8040"/><path d="M0.5 5 H13.5" stroke="#fff0c0"/></svg>
<div class="a" style="left:45px;top:323px;font-size:12px;letter-spacing:-0.1px;white-space:nowrap;">Loc:Queue - итоговая очередь</div>
<svg style="left:45px;top:346px" width="13" height="10" viewBox="0 0 13 10"><defs><linearGradient id="fg100" x1="0" y1="0" x2="0" y2="1"><stop offset="0" stop-color="#fafafa"/><stop offset="1" stop-color="#b8b8b8"/></linearGradient></defs><rect x="0.5" y="0.5" width="12" height="9" fill="url(#fg100)" stroke="#303030"/><rect x="1" y="1" width="11" height="2" fill="#20d8e0"/></svg>
<div class="a" style="left:64px;top:343px;font-size:12px;letter-spacing:-0.1px;white-space:nowrap;">Loc:FlagColor - выделение цветом</div>
<svg style="left:45px;top:366px" width="13" height="10" viewBox="0 0 13 10"><defs><linearGradient id="fg101" x1="0" y1="0" x2="0" y2="1"><stop offset="0" stop-color="#fafafa"/><stop offset="1" stop-color="#b8b8b8"/></linearGradient></defs><rect x="0.5" y="0.5" width="12" height="9" fill="url(#fg101)" stroke="#303030"/><rect x="1" y="1" width="11" height="2" fill="#20d8e0"/></svg>
<div class="a" style="left:64px;top:363px;font-size:12px;letter-spacing:-0.1px;white-space:nowrap;">Loc:FileName - имя файла</div>
<div class="a" style="left:385px;top:0;width:18px;height:372px;background:#f0f0f0"></div>
<div class="a" style="left:387px;top:20px;width:14px;height:161px;background:#cdcdcd"></div>
<svg style="left:389px;top:6px" width="10" height="6" viewBox="0 0 10 6"><path d="M1 5 L5 1 L9 5" fill="none" stroke="#606060" stroke-width="1.6"/></svg>
<svg style="left:389px;top:358px" width="10" height="6" viewBox="0 0 10 6"><path d="M1 1 L5 5 L9 1" fill="none" stroke="#606060" stroke-width="1.6"/></svg>
<div class="a" style="left:0;top:372px;width:403px;height:17px;background:#f0f0f0"></div>
<div class="a" style="left:18px;top:373px;width:192px;height:15px;background:#cdcdcd"></div>
<svg style="left:6px;top:376px" width="6" height="10" viewBox="0 0 6 10"><path d="M5 1 L1 5 L5 9" fill="none" stroke="#606060" stroke-width="1.6"/></svg>
<svg style="left:378px;top:376px" width="6" height="10" viewBox="0 0 6 10"><path d="M1 1 L5 5 L1 9" fill="none" stroke="#606060" stroke-width="1.6"/></svg>
</div>
<!-- bottom tabs -->
<div class="a" style="left:0;top:966px;width:415px;height:29px;background:linear-gradient(90deg,#646c8a 0%,#7a8298 40%,#a0a6ba 100%);border-bottom:3px solid #1e3038">
<div class="well"></div><div class="seltab" style="left:63px;width:59px"></div>
<svg style="left:5px;top:3px" width="16" height="17" viewBox="0 0 16 17"><path d="M1 7 L8 1 L15 7" fill="#e8c040" stroke="#a07020"/><rect x="2" y="7" width="12" height="9" fill="#f0f0f0" stroke="#3a5a90"/><path d="M4 10h8M4 13h8" stroke="#3a5a90"/></svg>
<div class="bt" style="left:22px">Prope...</div>
<svg style="left:67px;top:3px" width="14" height="18" viewBox="0 0 14 18"><path d="M2 3 L10 1 L12 15 L4 17 Z" fill="#2a78c8" stroke="#14467a"/><path d="M4 6 L10 4.5" stroke="#e8e8a0" stroke-width="1.2"/></svg>
<div class="bt" style="left:83px;color:#6a6a64">Data /...</div>
<svg style="left:127px;top:3px" width="17" height="19" viewBox="0 0 17 19"><path d="M2 1v8M0 5h16M12 1v7M10 5l-4-3v6z M15 10v8M0 14h16M4 10v8M6 14l4-3v6z" fill="#000" stroke="#000" stroke-width="1.2"/></svg>
<div class="bt" style="left:144px">Tab O...</div>
<svg style="left:187px;top:3px" width="16" height="18" viewBox="0 0 16 18"><rect x="1" y="2" width="14" height="15" fill="#c8d8f0" stroke="#3a5a90"/><rect x="4" y="6" width="3" height="10" fill="#2050c0"/><rect x="9" y="8" width="3" height="8" fill="#e05010"/></svg>
<div class="bt" style="left:204px">Toolbox</div>
<svg style="left:246px;top:2px" width="17" height="19" viewBox="0 0 17 19"><circle cx="8.5" cy="9" r="7.5" fill="#90a8c8" stroke="#4a5a80"/><rect x="3" y="9" width="11" height="8" fill="#d8e4f4" stroke="#223"/><text x="4" y="16" font-size="6" font-weight="bold" fill="#102060" font-family="Liberation Sans">OK</text></svg>
<div class="bt" style="left:264px">Contr...</div>
<svg style="left:306px;top:4px" width="16" height="14" viewBox="0 0 16 14"><rect x="0.5" y="0.5" width="15" height="13" fill="#dfe8f8" stroke="#2050b0"/><rect x="1" y="1" width="14" height="2" fill="#2050b0"/><rect x="3" y="5" width="4" height="6" fill="none" stroke="#2050b0"/><path d="M9 6h5M9 8h5M9 10h5" stroke="#2050b0"/></svg>
<div class="bt" style="left:324px">Applic...</div>
<svg style="left:366px;top:3px" width="17" height="17" viewBox="0 0 17 17"><rect x="1" y="3" width="11" height="8" fill="#f0d070" stroke="#a08020"/><circle cx="10" cy="9" r="4" fill="#c8e0f8" stroke="#3060a0"/><path d="M13 12 L16 15" stroke="#3060a0" stroke-width="2"/></svg>
<div class="bt" style="left:384px">Soluti...</div>
</div>
</div>

</body></html>
